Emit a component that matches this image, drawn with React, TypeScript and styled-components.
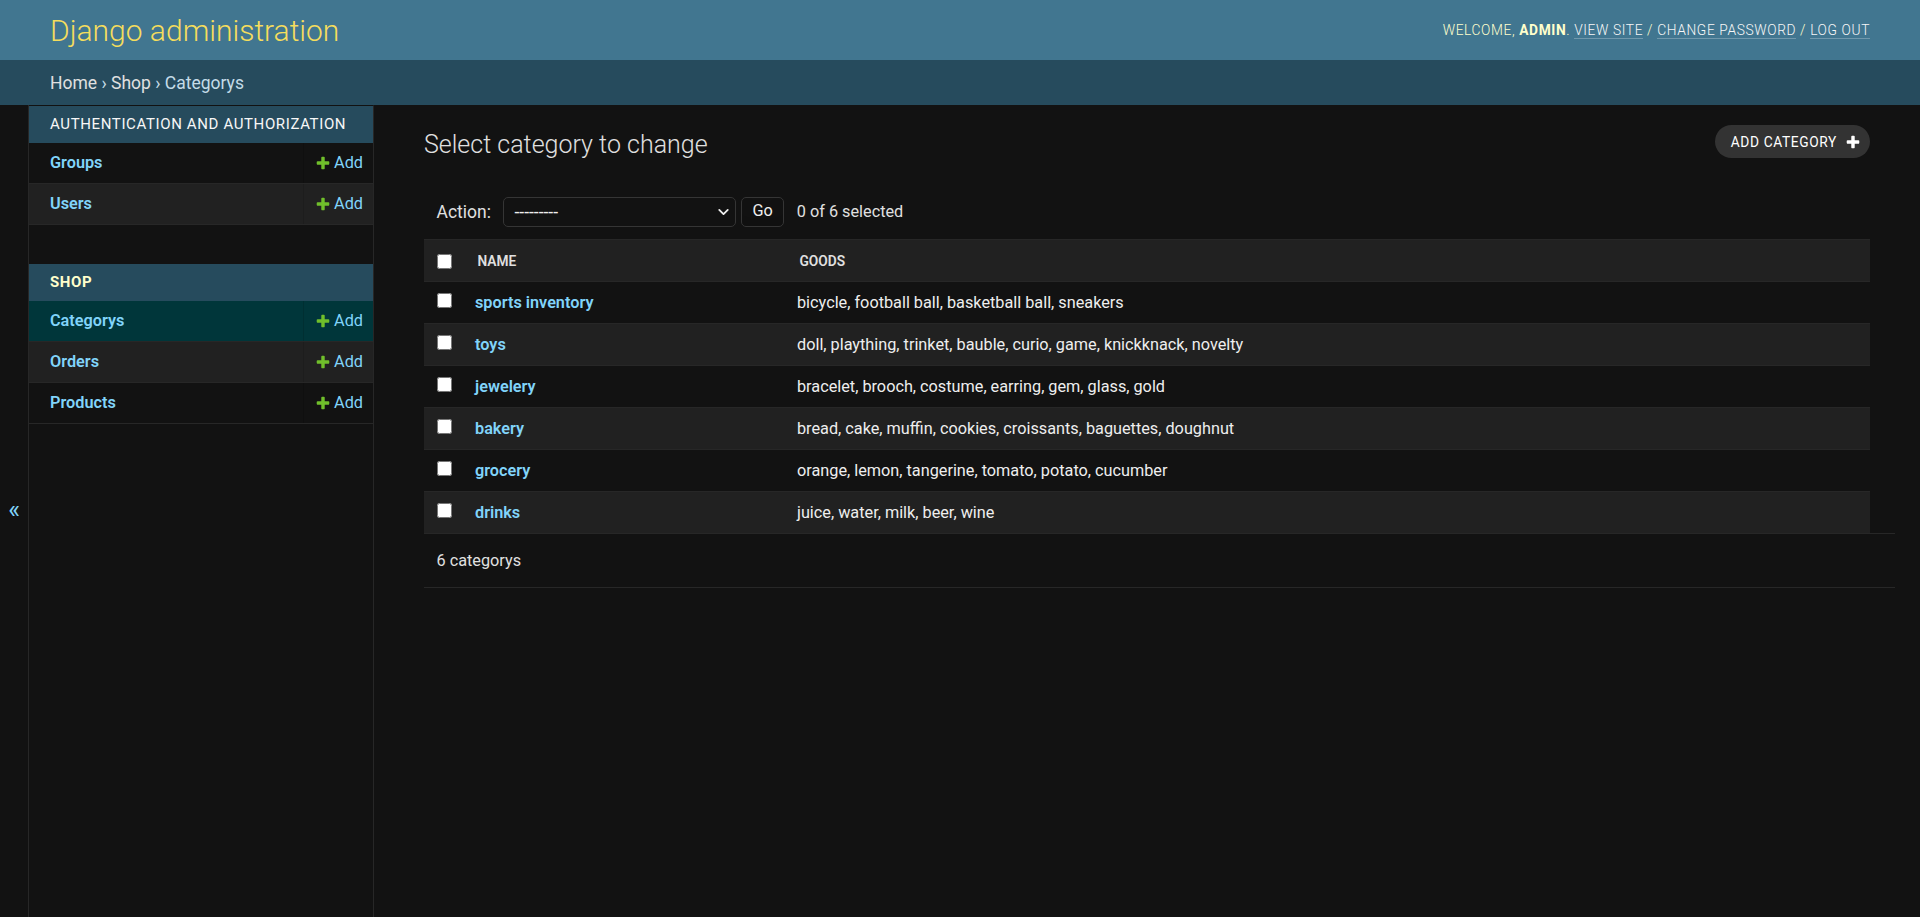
import React from 'react';
import styled, { createGlobalStyle } from 'styled-components';
import { ChevronDown } from 'lucide-react';

const GlobalStyle = createGlobalStyle`
  html, body { margin: 0; padding: 0; height: 100%; }
  body {
    background: #121212;
    color: #eeeeee;
    font-family: Roboto, "Noto Sans", "Liberation Sans", sans-serif;
    font-size: 17.5px;
  }
  #root { min-height: 100%; }
  *, *::before, *::after { box-sizing: border-box; }
  a { text-decoration: none; }
`;

const Container = styled.div`
  display: flex;
  flex-direction: column;
  min-height: 100vh;
`;

const Header = styled.header`
  display: flex;
  justify-content: space-between;
  align-items: center;
  padding: 12.5px 50px;
  background: #417690;
  color: #ffffcc;
`;

const Branding = styled.h1`
  margin: 0 25px 0 0;
  font-weight: 300;
  font-size: 30px;
  line-height: 35px;
  color: #f5dd5d;
`;

const UserTools = styled.div`
  font-size: 13.75px;
  font-weight: 300;
  letter-spacing: 0.625px;
  text-transform: uppercase;
  color: #ffffcc;
  white-space: nowrap;
  strong { font-weight: 700; }
`;

const ToolLink = styled.a`
  color: #f7f7f7;
  border-bottom: 1.25px solid rgba(255, 255, 255, 0.25);
`;

const Breadcrumbs = styled.nav`
  background: #264b5d;
  padding: 12.5px 50px;
  color: #c4dce8;
  font-size: 17.5px;
  line-height: 20px;
`;

const Crumb = styled.a`
  color: #e0e0e0;
`;

const Main = styled.div`
  display: flex;
  flex: 1 0 auto;
`;

const ToggleNav = styled.button`
  flex: 0 0 29px;
  display: flex;
  align-items: center;
  justify-content: center;
  padding: 0 0 4px;
  border: 0;
  border-right: 1px solid #272727;
  background: #121212;
  color: #81d4fa;
  font-family: Roboto, "Noto Sans", sans-serif;
  font-size: 25px;
  cursor: pointer;
`;

const NavSidebar = styled.nav`
  flex: 0 0 345px;
  border-top: 1px solid transparent;
  border-right: 1px solid #272727;
  background: #121212;
`;

const AppTable = styled.table`
  width: 100%;
  border-collapse: collapse;
  margin-bottom: 38.5px;
`;

const AppCaption = styled.caption<{ $current?: boolean }>`
  caption-side: top;
  text-align: left;
  padding: 10px 20px 10px 21px;
  font-size: 15px;
  line-height: 17px;
  letter-spacing: 0.625px;
  text-transform: uppercase;
  background: #264b5d;
  color: ${p => (p.$current ? '#ffffcc' : '#f7f7f7')};
  font-weight: ${p => (p.$current ? 700 : 400)};
`;

const ModelRow = styled.tr<{ $bg: string }>`
  background: ${p => p.$bg};
`;

const ModelName = styled.th`
  width: 100%;
  padding: 10px 10px 10px 21px;
  text-align: left;
  vertical-align: top;
  font-weight: 600;
  font-size: 16.25px;
  line-height: 20px;
  border-bottom: 1.25px solid #272727;
  a { color: #81d4fa; }
`;

const ModelAdd = styled.td`
  padding: 10px 10px 10px 11px;
  white-space: nowrap;
  vertical-align: top;
  font-size: 16.25px;
  line-height: 20px;
  border-bottom: 1.25px solid #272727;
  border-left: 1px solid rgba(0, 0, 0, 0.12);
`;

const AddLink = styled.a`
  display: inline-flex;
  align-items: center;
  vertical-align: top;
  height: 20px;
  gap: 3px;
  color: #81d4fa;
`;

const Content = styled.main`
  flex: 1 1 auto;
  min-width: 0;
  padding: 25px 50px;
`;

const TitleRow = styled.div`
  display: flex;
  justify-content: space-between;
  align-items: flex-start;
`;

const Title = styled.h1`
  margin: 0 0 25px;
  font-weight: 300;
  font-size: 25px;
  line-height: 29px;
  color: #e0e0e0;
`;

const ObjectTool = styled.a`
  display: inline-flex;
  align-items: center;
  gap: 8px;
  margin-top: -5px;
  height: 33px;
  padding: 0 9px 0 16px;
  border-radius: 16.5px;
  background: #333333;
  color: #ffffff;
  font-size: 13.75px;
  letter-spacing: 0.625px;
  text-transform: uppercase;
  font-weight: 400;
`;

const Actions = styled.div`
  display: flex;
  align-items: center;
  padding: 12.5px;
  line-height: 30px;
  color: #e0e0e0;
`;

const ActionLabel = styled.label`
  font-size: 17.5px;
`;

const SelectWrap = styled.span`
  position: relative;
  display: inline-flex;
  margin-left: 12.5px;
  svg {
    position: absolute;
    right: 4px;
    top: 50%;
    transform: translateY(-50%);
    pointer-events: none;
    color: #eeeeee;
  }
`;

const ActionSelect = styled.select`
  appearance: none;
  width: 233px;
  height: 30px;
  padding: 0 0 0 10px;
  border: 1.25px solid #353535;
  border-radius: 5px;
  background: #121212;
  color: #eeeeee;
  font-family: Roboto, "Noto Sans", sans-serif;
  font-size: 17.5px;
`;

const GoButton = styled.button`
  height: 30px;
  margin-left: 5px;
  padding: 0 10px;
  border: 1.25px solid #353535;
  border-radius: 5px;
  background: #121212;
  box-shadow: 0 -15px 20px -10px rgba(0, 0, 0, 0.15) inset;
  color: #eeeeee;
  font-family: Roboto, "Noto Sans", sans-serif;
  font-size: 16.25px;
  line-height: 1;
  cursor: pointer;
`;

const Counter = styled.span`
  margin-left: 13px;
  font-size: 16.25px;
`;

const ResultTable = styled.table`
  width: 100%;
  border-collapse: collapse;
  table-layout: fixed;
`;

const HeadCell = styled.th<{ $center?: boolean }>`
  padding: ${p => (p.$center ? '10.5px 0' : '10.5px 12.5px')};
  text-align: ${p => (p.$center ? 'center' : 'left')};
  vertical-align: middle;
  background: #212121;
  color: #e0e0e0;
  font-size: 13.75px;
  font-weight: 600;
  line-height: 20px;
  text-transform: uppercase;
  white-space: nowrap;
  border-top: 1.25px solid #272727;
  border-bottom: 1.25px solid #272727;
`;

const ResultRow = styled.tr<{ $even: boolean }>`
  background: ${p => (p.$even ? '#212121' : '#121212')};
`;

const CheckCell = styled.td`
  padding: 10px 0;
  text-align: center;
  vertical-align: top;
  line-height: 21px;
  border-bottom: 1.25px solid #272727;
`;

const NameCell = styled.th`
  padding: 10px;
  text-align: left;
  vertical-align: top;
  font-size: 16.25px;
  font-weight: 600;
  line-height: 21px;
  border-bottom: 1.25px solid #272727;
  a { color: #81d4fa; }
`;

const GoodsCell = styled.td`
  padding: 10px;
  vertical-align: top;
  font-size: 16.25px;
  line-height: 21px;
  color: #eeeeee;
  border-bottom: 1.25px solid #272727;
`;

const Check = styled.input.attrs({ type: 'checkbox' })<{ $head?: boolean }>`
  width: 15px;
  height: 15px;
  margin: ${p => (p.$head ? '0' : '1px 0 0')};
  vertical-align: ${p => (p.$head ? 'middle' : 'top')};
`;

const Paginator = styled.p`
  margin: -1.25px -25px 0 0;
  padding: 13px 0 13px 12.5px;
  font-size: 16.25px;
  line-height: 27.5px;
  color: #e0e0e0;
  border-bottom: 1.25px solid #272727;
  border-top: 1.25px solid #272727;
`;

const PlusIcon = ({ color, size }: { color: string; size: number }) => (
  <svg width={size} height={size} viewBox="0 0 1792 1792" aria-hidden="true">
    <path
      fill={color}
      d="M1600 796v192q0 40-28 68t-68 28h-416v416q0 40-28 68t-68 28h-192q-40 0-68-28t-28-68v-416h-416q-40 0-68-28t-28-68v-192q0-40 28-68t68-28h416v-416q0-40 28-68t68-28h192q40 0 68 28t28 68v416h416q40 0 68 28t28 68z"
    />
  </svg>
);

type App = { name: string; current?: boolean; models: { name: string; current?: boolean }[] };

const apps: App[] = [
  { name: 'Authentication and Authorization', models: [{ name: 'Groups' }, { name: 'Users' }] },
  {
    name: 'Shop',
    current: true,
    models: [{ name: 'Categorys', current: true }, { name: 'Orders' }, { name: 'Products' }],
  },
];

const rows = [
  { name: 'sports inventory', goods: 'bicycle, football ball, basketball ball, sneakers' },
  { name: 'toys', goods: 'doll, plaything, trinket, bauble, curio, game, knickknack, novelty' },
  { name: 'jewelery', goods: 'bracelet, brooch, costume, earring, gem, glass, gold' },
  { name: 'bakery', goods: 'bread, cake, muffin, cookies, croissants, baguettes, doughnut' },
  { name: 'grocery', goods: 'orange, lemon, tangerine, tomato, potato, cucumber' },
  { name: 'drinks', goods: 'juice, water, milk, beer, wine' },
];

export default function AppRoot() {
  return (
    <>
      <GlobalStyle />
      <Container>
        <Header>
          <Branding>Django administration</Branding>
          <UserTools>
            Welcome, <strong>admin</strong>. <ToolLink href="#">View site</ToolLink> /{' '}
            <ToolLink href="#">Change password</ToolLink> / <ToolLink href="#">Log out</ToolLink>
          </UserTools>
        </Header>
        <Breadcrumbs>
          <Crumb href="#">Home</Crumb> › <Crumb href="#">Shop</Crumb> › Categorys
        </Breadcrumbs>
        <Main>
          <ToggleNav aria-label="Toggle navigation">«</ToggleNav>
          <NavSidebar>
            {apps.map(app => (
              <AppTable key={app.name}>
                <AppCaption $current={app.current}>{app.name}</AppCaption>
                <tbody>
                  {app.models.map((m, i) => (
                    <ModelRow
                      key={m.name}
                      $bg={m.current ? '#00363a' : i % 2 === 1 ? '#212121' : '#121212'}
                    >
                      <ModelName scope="row">
                        <a href="#">{m.name}</a>
                      </ModelName>
                      <ModelAdd>
                        <AddLink href="#">
                          <PlusIcon color="#70bf2b" size={16} />
                          Add
                        </AddLink>
                      </ModelAdd>
                    </ModelRow>
                  ))}
                </tbody>
              </AppTable>
            ))}
          </NavSidebar>
          <Content>
            <TitleRow>
              <Title>Select category to change</Title>
              <ObjectTool href="#">
                Add category
                <PlusIcon color="#ffffff" size={16} />
              </ObjectTool>
            </TitleRow>
            <Actions>
              <ActionLabel>Action:</ActionLabel>
              <SelectWrap>
                <ActionSelect defaultValue="">
                  <option value="">---------</option>
                  <option value="delete_selected">Delete selected categorys</option>
                </ActionSelect>
                <ChevronDown size={17} strokeWidth={2.6} />
              </SelectWrap>
              <GoButton type="button">Go</GoButton>
              <Counter>0 of 6 selected</Counter>
            </Actions>
            <ResultTable>
              <colgroup>
                <col style={{ width: 41 }} />
                <col style={{ width: 322 }} />
                <col />
              </colgroup>
              <thead>
                <tr>
                  <HeadCell $center>
                    <Check $head />
                  </HeadCell>
                  <HeadCell>Name</HeadCell>
                  <HeadCell>Goods</HeadCell>
                </tr>
              </thead>
              <tbody>
                {rows.map((r, i) => (
                  <ResultRow key={r.name} $even={i % 2 === 1}>
                    <CheckCell>
                      <Check />
                    </CheckCell>
                    <NameCell>
                      <a href="#">{r.name}</a>
                    </NameCell>
                    <GoodsCell>{r.goods}</GoodsCell>
                  </ResultRow>
                ))}
              </tbody>
            </ResultTable>
            <Paginator>6 categorys</Paginator>
          </Content>
        </Main>
      </Container>
    </>
  );
}
